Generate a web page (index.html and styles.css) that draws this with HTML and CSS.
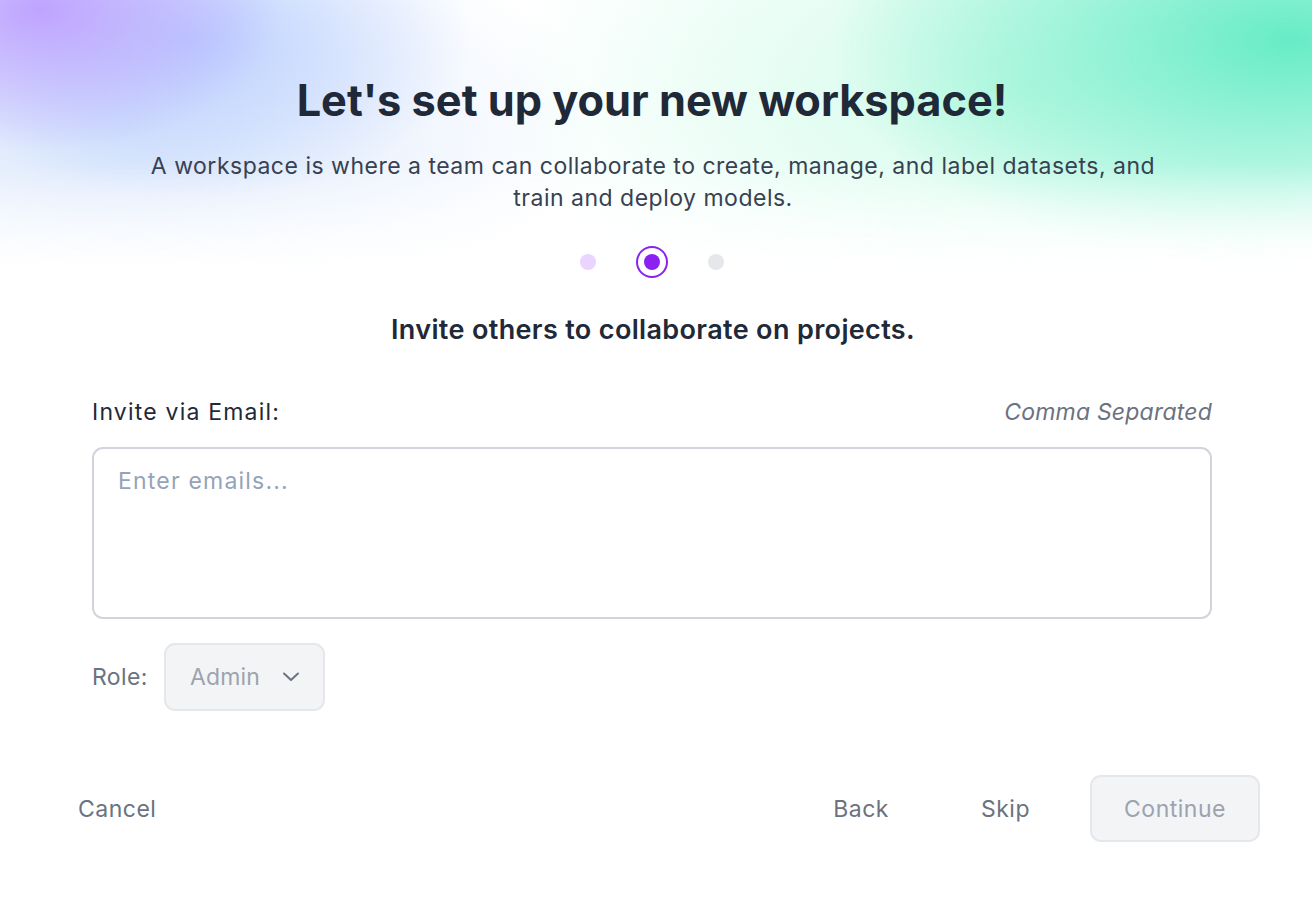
FILE: index.html
```html
<!DOCTYPE html>
<html lang="en">
<head>
<meta charset="utf-8">
<title>Set up workspace</title>
<link rel="stylesheet" href="styles.css">
</head>
<body>
<div class="page">
  <div class="bg"></div>
  <header class="hero">
    <h1 class="title">Let's set up your new workspace!</h1>
    <p class="subtitle">A workspace is where a team can collaborate to create, manage, and label datasets, and train and deploy models.</p>
  </header>
  <div class="steps">
    <span class="dot done"></span>
    <span class="dot active"><span class="inner"></span></span>
    <span class="dot todo"></span>
  </div>
  <h2 class="step-title">Invite others to collaborate on projects.</h2>
  <section class="form">
    <div class="label-row">
      <label class="label">Invite via Email:</label>
      <span class="hint">Comma Separated</span>
    </div>
    <textarea class="emails" placeholder="Enter emails..."></textarea>
    <div class="role-row">
      <span class="role-label">Role:</span>
      <div class="select">
        <span>Admin</span>
        <svg class="chev" width="20" height="20" viewBox="0 0 20 20" fill="none"><path d="M3 6.5l7 6.5 7-6.5" stroke="#6b7280" stroke-width="2" stroke-linecap="round" stroke-linejoin="round"/></svg>
      </div>
    </div>
  </section>
  <footer class="footer">
    <button class="link cancel">Cancel</button>
    <div class="right">
      <button class="link">Back</button>
      <button class="link">Skip</button>
      <button class="continue">Continue</button>
    </div>
  </footer>
</div>
</body>
</html>
```
FILE: styles.css
```css
* { box-sizing: border-box; }
html, body { margin: 0; padding: 0; background: #fff; }
body { font-family: Inter, "Noto Sans", sans-serif; color: #1f2937; }
.page { position: relative; width: 1312px; height: 898px; overflow: hidden; }
.bg {
  position: absolute; left: 0; top: 0; width: 100%; height: 300px; z-index: 0;
  background:
    radial-gradient(ellipse 240px 140px at 40px 10px, rgba(190,160,255,0.95), rgba(190,160,255,0) 100%),
    radial-gradient(ellipse 280px 160px at 190px 40px, rgba(175,200,255,0.8), rgba(175,200,255,0) 100%),
    radial-gradient(ellipse 460px 230px at 1290px 40px, rgba(95,235,195,0.95), rgba(95,235,195,0) 100%),
    radial-gradient(ellipse 520px 270px at 1020px 90px, rgba(190,250,225,0.7), rgba(190,250,225,0) 100%),
    radial-gradient(ellipse 480px 230px at 120px 130px, rgba(205,222,250,0.75), rgba(205,222,250,0) 100%);
  -webkit-mask-image: linear-gradient(to bottom, #000 55%, transparent 90%);
  mask-image: linear-gradient(to bottom, #000 55%, transparent 90%);
}
.hero { position: relative; z-index: 1; text-align: center; padding-top: 72px; }
.title { margin: 0 8px 0 0; font-size: 43.3px; line-height: 56px; font-weight: 700; color: #1f2937; }
.subtitle { margin: 22px auto 0; width: 1030px; font-size: 23px; line-height: 32px; letter-spacing: 0.5px; color: #374151; transform: translateX(-3px); }
.steps { position: relative; z-index: 1; display: flex; justify-content: center; align-items: center; gap: 40px; margin-top: 32px; padding-right: 8px; }
.dot { width: 16px; height: 16px; border-radius: 50%; display: block; }
.dot.done { background: #e9d5ff; }
.dot.todo { background: #e5e7eb; }
.dot.active { width: 32px; height: 32px; border: 2px solid #8b20f0; display: flex; align-items: center; justify-content: center; }
.dot.active .inner { width: 16px; height: 16px; border-radius: 50%; background: #8b20f0; }
.step-title { margin: 34px 6px 0 0; text-align: center; font-size: 27px; line-height: 36px; font-weight: 600; letter-spacing: 0.35px; color: #1f2937; }
.form { width: 1120px; margin: 48px 0 0 92px; }
.label-row { display: flex; justify-content: space-between; align-items: center; height: 32px; }
.label { font-size: 23px; letter-spacing: 1.2px; color: #1f2937; }
.hint { font-size: 23px; letter-spacing: 0.2px; font-style: italic; color: #6b7280; }
.emails {
  display: block; margin-top: 19px; width: 100%; height: 172px; resize: none;
  border: 2px solid #d1d5db; border-radius: 11px; padding: 16px 24px;
  font-family: inherit; font-size: 23px; line-height: 32px; letter-spacing: 1.2px; color: #1f2937; outline: none; background: #fff;
}
.emails::placeholder { color: #94a3b8; }
.role-row { display: flex; align-items: center; gap: 16px; margin-top: 24px; }
.role-label { font-size: 23px; letter-spacing: 0.4px; color: #6b7280; }
.select {
  display: flex; align-items: center; justify-content: space-between; height: 68px; padding: 0 24px 0 24px;
  background: #f3f4f6; border: 2px solid #e5e7eb; border-radius: 11px;
  font-size: 23px; letter-spacing: 0.2px; color: #9ca3af; width: 161px;
}
.chev { display: block; margin-right: -2px; }
.footer { display: flex; justify-content: space-between; align-items: center; margin: 64px 52px 0 78px; }
.right { display: flex; align-items: center; gap: 30px; }
button { font-family: inherit; font-size: 23px; letter-spacing: 0.5px; background: none; border: none; padding: 0; cursor: pointer; }
.link { color: #6b7280; }
.right .link { padding: 0 30px; }
.right .link + .link { margin-left: 2px; }
.continue {
  width: 170px; height: 67px; background: #f3f4f6; border: 2px solid #e5e7eb;
  border-radius: 11px; color: #9ca3af;
}
```
